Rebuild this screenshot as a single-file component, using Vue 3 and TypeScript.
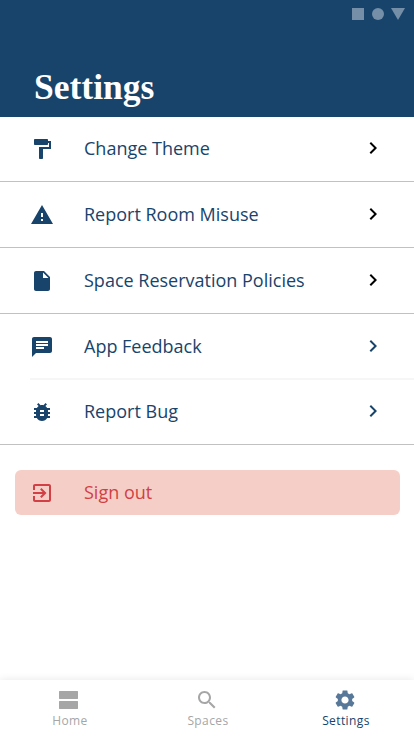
<script setup lang="ts">
interface Row {
  label: string
  icon: string
  divider: 'full' | 'inset'
  dark: boolean
}

const rows: Row[] = [
  {
    label: 'Change Theme',
    icon: 'M18 4V3c0-.55-.45-1-1-1H5c-.55 0-1 .45-1 1v4c0 .55.45 1 1 1h12c.55 0 1-.45 1-1V6h1v4H9v11c0 .55.45 1 1 1h2c.55 0 1-.45 1-1v-9h8V4h-3z',
    divider: 'full',
    dark: true,
  },
  {
    label: 'Report Room Misuse',
    icon: 'M1 21h22L12 2 1 21zm12-3h-2v-2h2v2zm0-4h-2v-4h2v4z',
    divider: 'full',
    dark: true,
  },
  {
    label: 'Space Reservation Policies',
    icon: 'M6 2c-1.1 0-1.99.9-1.99 2L4 20c0 1.1.89 2 1.99 2H18c1.1 0 2-.9 2-2V8l-6-6H6zm7 7V3.5L18.5 9H13z',
    divider: 'full',
    dark: true,
  },
  {
    label: 'App Feedback',
    icon: 'M20 2H4c-1.1 0-1.99.9-1.99 2L2 22l4-4h14c1.1 0 2-.9 2-2V4c0-1.1-.9-2-2-2zM6 9h12v2H6V9zm8 5H6v-2h8v2zm4-6H6V6h12v2z',
    divider: 'inset',
    dark: false,
  },
  {
    label: 'Report Bug',
    icon: 'M20 8h-2.81c-.45-.78-1.07-1.45-1.82-1.96L17 4.41 15.59 3l-2.17 2.17C12.96 5.06 12.49 5 12 5c-.49 0-.96.06-1.41.17L8.41 3 7 4.41l1.62 1.63C7.88 6.55 7.26 7.22 6.81 8H4v2h2.09c-.05.33-.09.66-.09 1v1H4v2h2v1c0 .34.04.67.09 1H4v2h2.81c1.04 1.79 2.97 3 5.19 3s4.15-1.21 5.19-3H20v-2h-2.09c.05-.33.09-.66.09-1v-1h2v-2h-2v-1c0-.34-.04-.67-.09-1H20V8zm-6 8h-4v-2h4v2zm0-4h-4v-2h4v2z',
    divider: 'full',
    dark: false,
  },
]

const tabs = [
  { label: 'Home', active: false, icon: 'M2.5 3h18c.3 0 .5.2.5.5v7c0 .3-.2.5-.5.5h-18c-.3 0-.5-.2-.5-.5v-7c0-.3.2-.5.5-.5zM2.5 13h18c.3 0 .5.2.5.5v7c0 .3-.2.5-.5.5h-18c-.3 0-.5-.2-.5-.5v-7c0-.3.2-.5.5-.5z' },
  { label: 'Spaces', active: false, icon: 'M15.5 14h-.79l-.28-.27C15.41 12.59 16 11.11 16 9.5 16 5.91 13.09 3 9.5 3S3 5.91 3 9.5 5.91 16 9.5 16c1.61 0 3.09-.59 4.23-1.57l.27.28v.79l5 4.99L20.49 19l-4.99-5zm-6 0C7.01 14 5 11.99 5 9.5S7.01 5 9.5 5 14 7.01 14 9.5 11.99 14 9.5 14z' },
  { label: 'Settings', active: true, icon: 'M19.14 12.94c.04-.3.06-.61.06-.94 0-.32-.02-.64-.07-.94l2.03-1.58c.18-.14.23-.41.12-.61l-1.92-3.32c-.12-.22-.37-.29-.59-.22l-2.39.96c-.5-.38-1.03-.7-1.62-.94l-.36-2.54c-.04-.24-.24-.41-.48-.41h-3.84c-.24 0-.43.17-.47.41l-.36 2.54c-.59.24-1.13.57-1.62.94l-2.39-.96c-.22-.08-.47 0-.59.22L2.74 8.87c-.12.21-.08.47.12.61l2.03 1.58c-.05.3-.09.63-.09.94s.02.64.07.94l-2.03 1.58c-.18.14-.23.41-.12.61l1.92 3.32c.12.22.37.29.59.22l2.39-.96c.5.38 1.03.7 1.62.94l.36 2.54c.05.24.24.41.48.41h3.84c.24 0 .44-.17.47-.41l.36-2.54c.59-.24 1.13-.56 1.62-.94l2.39.96c.22.08.47 0 .59-.22l1.92-3.32c.12-.22.07-.47-.12-.61l-2.01-1.58zM12 15.6c-1.98 0-3.6-1.62-3.6-3.6s1.62-3.6 3.6-3.6 3.6 1.62 3.6 3.6-1.62 3.6-3.6 3.6z' },
]
</script>

<template>
  <div class="screen">
    <header class="header">
      <svg class="status" width="56" height="12" viewBox="0 0 56 12">
        <path d="M1 0h12v12H1z" />
        <circle cx="27" cy="6" r="6" />
        <path d="M40 0h14l-7 12z" />
      </svg>
      <h1 class="title">Settings</h1>
    </header>

    <main class="content">
      <div v-for="row in rows" :key="row.label" class="row" :class="row.divider">
        <svg class="icon" viewBox="0 0 24 24"><path :d="row.icon" /></svg>
        <span class="label">{{ row.label }}</span>
        <svg class="chevron" :class="{ dark: row.dark }" viewBox="0 0 24 24">
          <path d="M10 6L8.59 7.41 13.17 12l-4.58 4.59L10 18l6-6z" />
        </svg>
      </div>

      <button class="sign-out" type="button">
        <svg class="icon" viewBox="0 0 24 24">
          <path d="M10.09 15.59L11.5 17l5-5-5-5-1.41 1.41L12.67 11H3v2h9.67l-2.58 2.59zM19 3H5c-1.11 0-2 .9-2 2v4h2V5h14v14H5v-4H3v4c0 1.1.89 2 2 2h14c1.1 0 2-.9 2-2V5c0-1.1-.9-2-2-2z" />
        </svg>
        <span class="label">Sign out</span>
      </button>
    </main>

    <nav class="tabs">
      <div v-for="tab in tabs" :key="tab.label" class="tab" :class="{ active: tab.active }">
        <svg class="tab-icon" viewBox="0 0 24 24"><path :d="tab.icon" /></svg>
        <span class="tab-label">{{ tab.label }}</span>
      </div>
    </nav>
  </div>
</template>

<style>
body {
  margin: 0;
}
</style>

<style scoped>
.screen {
  display: flex;
  flex-direction: column;
  height: 736px;
  overflow: hidden;
  background: #fff;
  color: #18446c;
  font-family: 'Open Sans', 'Noto Sans', sans-serif;
}

svg {
  display: block;
  flex: none;
  fill: currentColor;
}

.header {
  display: flex;
  flex-direction: column;
  justify-content: space-between;
  box-sizing: border-box;
  height: 117px;
  padding: 8px 7px 10px 34px;
  background: #18446c;
}

.status {
  align-self: flex-end;
  color: #748fa7;
}

.title {
  margin: 0;
  color: #fff;
  font: bold 35.5px/40px 'Liberation Serif', serif;
}

.content {
  flex: 1;
}

.row {
  display: flex;
  align-items: center;
  box-sizing: border-box;
  height: 66px;
  padding: 1px 29px 0 30px;
  border-bottom: 1px solid #c1c1c1;
}

.row:first-child {
  height: 65px;
  padding-top: 0;
}

.row.inset {
  margin-left: 30px;
  padding-left: 0;
  border-bottom: 2px solid #f6f6f6;
}

.row.inset + .row {
  height: 65px;
  padding-top: 0;
}

.icon {
  width: 24px;
  height: 24px;
}

.label {
  flex: 1;
  margin-bottom: 2px;
  margin-left: 30px;
  font-size: 18px;
  line-height: 24px;
  text-align: left;
}

.chevron {
  width: 24px;
  height: 24px;
  margin-bottom: 2px;
}

.chevron.dark {
  color: #000;
}

.sign-out {
  display: flex;
  align-items: center;
  box-sizing: border-box;
  width: 385px;
  height: 45px;
  margin: 25px 14px 0 15px;
  padding: 0 15px;
  border: 0;
  border-radius: 6px;
  background: #f5cfc7;
  color: #d23f44;
  font-family: inherit;
}

.tabs {
  display: grid;
  grid-template-columns: repeat(3, 138px);
  height: 56px;
  background: #fff;
  box-shadow: 0 0 8px rgba(0, 0, 0, 0.1);
}

.tab {
  display: flex;
  flex-direction: column;
  align-items: center;
  padding-top: 8px;
  color: #a6a6a6;
}

.tab-icon {
  width: 24px;
  height: 24px;
}

.tab-label {
  margin-top: 1px;
  padding-left: 2px;
  font-size: 12px;
  line-height: 16px;
  letter-spacing: 0.4px;
}

.tab.active {
  color: #18446c;
}

.tab.active .tab-icon {
  color: #577899;
}
</style>
